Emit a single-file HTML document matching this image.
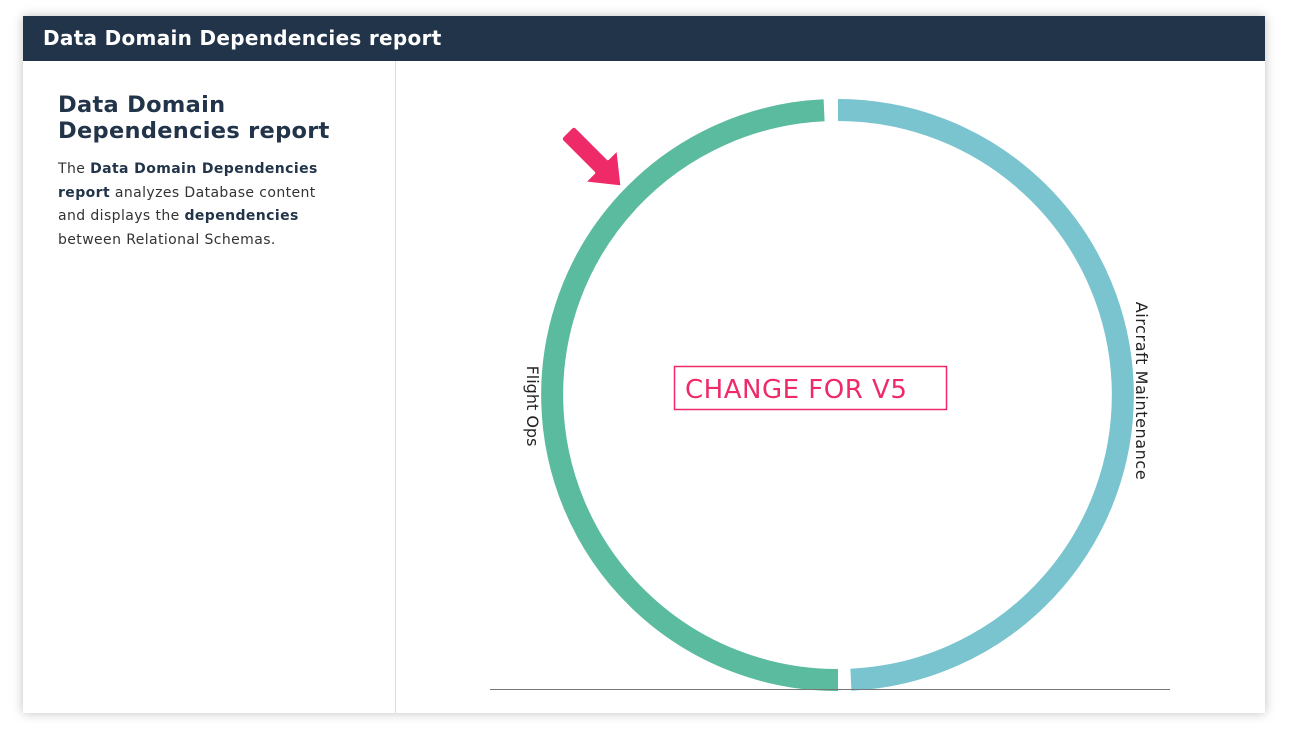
<!DOCTYPE html>
<html><head><style>
body{margin:0;background:#fff;width:1289px;height:745px;overflow:hidden;font-family:"DejaVu Sans","Liberation Sans",sans-serif;}
.card{position:absolute;left:23px;top:16px;width:1242px;height:697px;background:#fff;box-shadow:0 0 10px rgba(0,0,0,.25);}
.hdr{height:45px;background:#22344a;color:#fff;font-weight:bold;font-size:20px;letter-spacing:0.3px;line-height:45px;padding-left:20px;}
.side{position:absolute;left:0;top:45px;width:372px;height:652px;border-right:1px solid #ddd;}
h1{position:absolute;left:35px;top:31px;margin:0;font-size:22.5px;line-height:26px;color:#22344a;font-weight:bold;letter-spacing:0.3px;}
p{position:absolute;left:35px;top:97px;margin:0;width:285px;font-size:14px;line-height:23.5px;color:#333;letter-spacing:0.4px;}
p b{color:#22344a;}
</style></head><body>
<div class="card"><div class="hdr">Data Domain Dependencies report</div>
<div class="side"><h1>Data Domain<br>Dependencies report</h1>
<p>The <b>Data Domain Dependencies report</b> analyzes Database content and displays the <b>dependencies</b> between Relational Schemas.</p></div></div>
<svg width="1289" height="745" style="position:absolute;left:0;top:0">
<path d="M838 110 A285 285 0 0 1 850.9 679.7" fill="none" stroke="#79c4cf" stroke-width="22"/>
<path d="M838 680 A285 285 0 0 1 824.1 110.3" fill="none" stroke="#5bbb9e" stroke-width="22"/>
<line x1="490" y1="689.5" x2="1170" y2="689.5" stroke="#777" stroke-width="1"/>
<g transform="translate(622,187) rotate(-45)">
<path d="M0 0 L-24 -30 L-10 -30 L-10 -74 Q-10 -78 -6 -78 L6 -78 Q10 -78 10 -74 L10 -30 L24 -30 Z" fill="#ee2a68" stroke="#fff" stroke-width="3" stroke-linejoin="round"/>
</g>
<text x="527" y="406" font-size="16" fill="#222" font-family="DejaVu Sans,sans-serif" text-anchor="middle" transform="rotate(90 527 406)">Flight Ops</text>
<text x="1136" y="391" font-size="16" letter-spacing="0.6" fill="#222" font-family="DejaVu Sans,sans-serif" text-anchor="middle" transform="rotate(90 1136 391)">Aircraft Maintenance</text>
<rect x="674.5" y="366.5" width="272" height="43" fill="#fff" stroke="#ee2a68" stroke-width="1.5"/>
<text x="685" y="398" font-size="26" letter-spacing="0.5" fill="#ee2a68" font-family="DejaVu Sans,sans-serif">CHANGE FOR V5</text>
</svg>
</body></html>
